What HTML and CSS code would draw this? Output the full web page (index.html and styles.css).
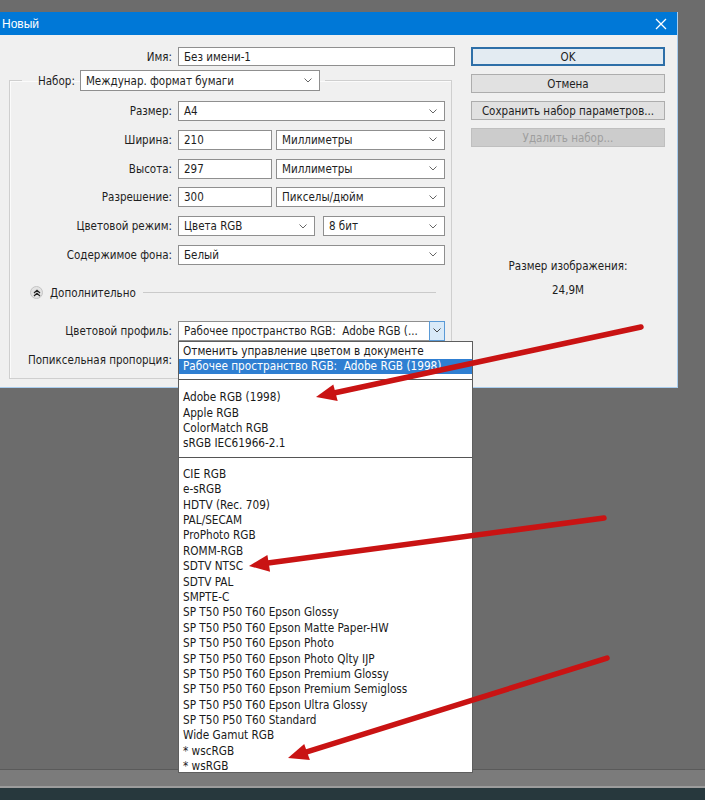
FILE: index.html
```html
<!DOCTYPE html>
<html lang="ru">
<head>
<meta charset="utf-8">
<title>Новый</title>
<link rel="stylesheet" href="styles.css">
</head>
<body>
<div class="screen">
  <div class="topgap"></div>
  <div class="dialog">
    <div class="titlebar">
      <span class="title">Новый</span>
      <svg class="close" width="12" height="12" viewBox="0 0 12 12"><path d="M1 1L11 11M11 1L1 11" stroke="#fff" stroke-width="1.3" fill="none"/></svg>
    </div>
    <div class="body">
      <div class="left">
        <div class="name-row">
          <span class="lbl name-lbl">Имя:</span>
          <div class="field input name-input">Без имени-1</div>
        </div>
        <fieldset class="group">
          <legend class="legend">
            <span class="lbl">Набор:</span>
            <div class="field select preset">Междунар. формат бумаги<svg class="chev" width="8" height="5" viewBox="0 0 8 5"><path d="M0.5 0.5L4 4L7.5 0.5" stroke="#666" fill="none"/></svg></div>
          </legend>
          <div class="grid">
            <span class="lbl">Размер:</span>
            <div class="field select">A4<svg class="chev" width="8" height="5" viewBox="0 0 8 5"><path d="M0.5 0.5L4 4L7.5 0.5" stroke="#666" fill="none"/></svg></div>

            <span class="lbl">Ширина:</span>
            <div class="pair">
              <div class="field input num">210</div>
              <div class="field select unit">Миллиметры<svg class="chev" width="8" height="5" viewBox="0 0 8 5"><path d="M0.5 0.5L4 4L7.5 0.5" stroke="#666" fill="none"/></svg></div>
            </div>

            <span class="lbl">Высота:</span>
            <div class="pair">
              <div class="field input num">297</div>
              <div class="field select unit">Миллиметры<svg class="chev" width="8" height="5" viewBox="0 0 8 5"><path d="M0.5 0.5L4 4L7.5 0.5" stroke="#666" fill="none"/></svg></div>
            </div>

            <span class="lbl">Разрешение:</span>
            <div class="pair">
              <div class="field input num">300</div>
              <div class="field select unit">Пикселы/дюйм<svg class="chev" width="8" height="5" viewBox="0 0 8 5"><path d="M0.5 0.5L4 4L7.5 0.5" stroke="#666" fill="none"/></svg></div>
            </div>

            <span class="lbl">Цветовой режим:</span>
            <div class="pair mode">
              <div class="field select cmode">Цвета RGB<svg class="chev" width="8" height="5" viewBox="0 0 8 5"><path d="M0.5 0.5L4 4L7.5 0.5" stroke="#666" fill="none"/></svg></div>
              <div class="field select bits">8 бит<svg class="chev" width="8" height="5" viewBox="0 0 8 5"><path d="M0.5 0.5L4 4L7.5 0.5" stroke="#666" fill="none"/></svg></div>
            </div>

            <span class="lbl">Содержимое фона:</span>
            <div class="field select">Белый<svg class="chev" width="8" height="5" viewBox="0 0 8 5"><path d="M0.5 0.5L4 4L7.5 0.5" stroke="#666" fill="none"/></svg></div>
          </div>

          <div class="advanced">
            <span class="adv-icon"><svg width="8" height="8" viewBox="0 0 8 8"><path d="M1 4L4 1.2L7 4M1 7L4 4.2L7 7" stroke="#222" stroke-width="1.2" fill="none"/></svg></span>
            <span class="adv-text">Дополнительно</span>
            <span class="adv-line"></span>
          </div>

          <div class="grid grid2">
            <span class="lbl">Цветовой профиль:</span>
            <div class="field select profile"><span class="profile-text">Рабочее пространство RGB:&nbsp; Adobe RGB (...</span><span class="drop-btn"><svg width="8" height="5" viewBox="0 0 8 5"><path d="M0.5 0.5L4 4L7.5 0.5" stroke="#444" fill="none"/></svg></span></div>

            <span class="lbl">Попиксельная пропорция:</span>
            <div class="field select"></div>
          </div>
        </fieldset>
      </div>

      <div class="right">
        <div class="btn default">OK</div>
        <div class="btn">Отмена</div>
        <div class="btn">Сохранить набор параметров...</div>
        <div class="btn disabled">Удалить набор...</div>
        <div class="size-title">Размер изображения:</div>
        <div class="size-val">24,9M</div>
      </div>
    </div>
  </div>
  <div class="workspace"></div>
  <div class="strip"></div>
  <div class="taskbar"></div>

  <div class="dropdown">
    <div class="dd-top">
      <div class="item">Отменить управление цветом в документе</div>
      <div class="item selected">Рабочее пространство RGB:&nbsp; Adobe RGB (1998)</div>
    </div>
    <div class="dd-group g1">
      <div class="item">Adobe RGB (1998)</div>
      <div class="item">Apple RGB</div>
      <div class="item">ColorMatch RGB</div>
      <div class="item">sRGB IEC61966-2.1</div>
    </div>
    <div class="dd-group g2">
      <div class="item">CIE RGB</div>
      <div class="item">e-sRGB</div>
      <div class="item">HDTV (Rec. 709)</div>
      <div class="item">PAL/SECAM</div>
      <div class="item">ProPhoto RGB</div>
      <div class="item">ROMM-RGB</div>
      <div class="item">SDTV NTSC</div>
      <div class="item">SDTV PAL</div>
      <div class="item">SMPTE-C</div>
      <div class="item">SP T50 P50 T60 Epson Glossy</div>
      <div class="item">SP T50 P50 T60 Epson Matte Paper-HW</div>
      <div class="item">SP T50 P50 T60 Epson Photo</div>
      <div class="item">SP T50 P50 T60 Epson Photo Qlty IJP</div>
      <div class="item">SP T50 P50 T60 Epson Premium Glossy</div>
      <div class="item">SP T50 P50 T60 Epson Premium Semigloss</div>
      <div class="item">SP T50 P50 T60 Epson Ultra Glossy</div>
      <div class="item">SP T50 P50 T60 Standard</div>
      <div class="item">Wide Gamut RGB</div>
      <div class="item">* wscRGB</div>
      <div class="item">* wsRGB</div>
    </div>
  </div>

  <svg class="arrows" width="705" height="800" viewBox="0 0 705 800">
    <g stroke="#c91313" stroke-width="5.5" stroke-linecap="round" fill="none">
      <line x1="641" y1="327" x2="334" y2="393"/>
      <line x1="604" y1="518" x2="268" y2="563"/>
      <line x1="607" y1="658" x2="306" y2="752"/>
    </g>
    <g fill="#c91313">
      <polygon points="316,397 333.3,384.4 337.7,401"/>
      <polygon points="249,566 267.4,554.9 270.1,571.7"/>
      <polygon points="288,758 304.2,743.9 309.9,760.1"/>
    </g>
  </svg>
</div>
</body>
</html>
```

FILE: styles.css
```css
* { box-sizing: border-box; }
html, body { margin: 0; padding: 0; }
body {
  background: #6c6c6c;
  font-family: "DejaVu Sans Condensed", "DejaVu Sans", Verdana, sans-serif;
  font-size: 11.5px;
  color: #1e1e1e;
}
.screen {
  position: relative;
  width: 705px;
  height: 800px;
  overflow: hidden;
  display: flex;
  flex-direction: column;
}
.topgap { height: 12px; flex: none; }
.dialog {
  width: 678px;
  height: 376px;
  flex: none;
  background: #f0f0f0;
  border-right: 1px solid #a9cdee;
  border-bottom: 1px solid #a9cdee;
  display: flex;
  flex-direction: column;
}
.titlebar {
  height: 23px;
  background: #0078d7;
  display: flex;
  align-items: center;
  justify-content: space-between;
  padding: 0 10px 0 2px;
  color: #fff;
  flex: none;
}
.title { font-family: "Liberation Sans", Arial, sans-serif; font-size: 12px; }
.close { display: block; }
.body {
  display: flex;
  padding-top: 12px;
  flex: 1;
}
.left { width: 460px; flex: none; }
.name-row { display: flex; align-items: center; height: 19px; }
.name-lbl { width: 172px; }
.name-input { margin-left: 6px; width: 277px; }
.lbl { text-align: right; white-space: nowrap; }

.field {
  height: 20px;
  background: #fff;
  border: 1px solid #8f8f8f;
  display: flex;
  align-items: center;
  padding-left: 5px;
  white-space: nowrap;
  position: relative;
}
.input { height: 19px; }
.select { justify-content: space-between; padding-right: 7px; }
.chev { flex: none; }

.group {
  margin: 4px 0 0 9px;
  width: 443px;
  padding: 0 0 8px 0;
  border: 1px solid #cfcfcf;
  box-shadow: inset 1px 1px 0 #fbfbfb;
}
.legend {
  margin-left: 12px;
  padding: 0 5px 0 16px;
  display: flex;
  align-items: center;
  height: 21px;
}
.legend .lbl { margin-right: 5px; }
.preset { width: 240px; height: 21px; }

.grid {
  display: grid;
  grid-template-columns: 162px 267px;
  column-gap: 6px;
  row-gap: 8.8px;
  grid-auto-rows: 20px;
  align-items: center;
  padding-top: 10px;
}
.grid > .lbl { text-align: right; }
.pair { display: flex; gap: 4px; }
.num { width: 94px; height: 20px; }
.unit { flex: 1; }
.mode { gap: 8px; }
.cmode { width: 137px; }
.bits { flex: 1; }

.advanced {
  display: flex;
  align-items: center;
  height: 14px;
  margin-top: 21px;
  padding-left: 20px;
}
.adv-icon {
  width: 13px; height: 13px;
  border-radius: 50%;
  background: #e3e3e3;
  border: 1px solid #c4c4c4;
  display: flex; align-items: center; justify-content: center;
}
.adv-icon svg { display: block; }
.adv-text { margin-left: 7px; }
.adv-line { flex: none; width: 293px; height: 1px; background: #cacaca; margin-left: 7px; }

.grid2 { padding-top: 21px; row-gap: 9px; }
.profile { padding-right: 0; }
.profile-text { overflow: hidden; }
.drop-btn {
  width: 16px; height: 20px;
  margin: -1px -1px -1px 0;
  border: 1px solid #5a9ad6;
  background: #d9eaf8;
  display: flex; align-items: center; justify-content: center;
  flex: none;
}

.right {
  width: 194px;
  margin-left: 11px;
  display: flex;
  flex-direction: column;
  gap: 8px;
  text-align: center;
}
.btn {
  height: 19px;
  background: #e1e1e1;
  border: 1px solid #adadad;
  display: flex; align-items: center; justify-content: center;
  white-space: nowrap;
}
.btn.default {
  border: 2px solid #2e6fa8;
  background: #e3ebf2;
}
.btn.disabled {
  background: #cccccc;
  border-color: #bfbfbf;
  color: #9e9e9e;
}
.size-title { margin-top: 104px; }
.size-val { margin-top: 2px; }

.workspace { height: 381px; flex: none; }
.strip {
  height: 19px;
  flex: none;
  background: #7b7b7b;
  border-top: 1px solid #5a5a5a;
  border-bottom: 2px solid #9c9c9c;
}
.taskbar { flex: 1; background: #27383d; }

.dropdown {
  position: absolute;
  left: 178px;
  top: 341px;
  width: 295px;
  height: 432px;
  background: #fff;
  border: 1px solid #5e5e5e;
  font-size: 11.7px;
  line-height: 15.4px;
  display: flex;
  flex-direction: column;
}
.item { padding-left: 4px; height: 15.4px; white-space: nowrap; color: #1a1a1a; }
.item.selected { background: #2f7fd2; color: #fff; }
.dd-top { padding-top: 1.5px; padding-bottom: 5px; border-bottom: 1px solid #555; }
.g1 { padding: 10px 0 5px; border-bottom: 1px solid #555; }
.g2 { padding-top: 9px; }

.arrows { position: absolute; left: 0; top: 0; pointer-events: none; }
```
